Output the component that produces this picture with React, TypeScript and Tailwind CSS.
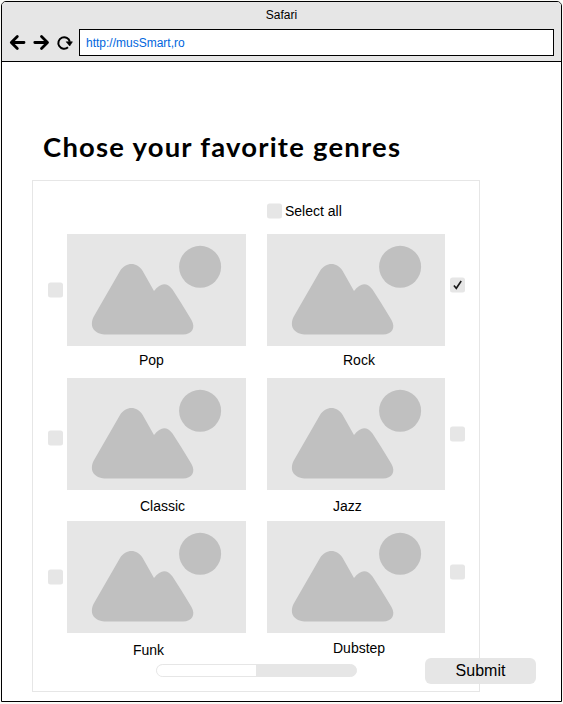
type Genre = { name: string; box: string; caption: string; row: string; checked?: boolean };

const left: Genre[] = [
  { name: "Pop", box: "mt-[48px]", caption: "pl-[72px] pt-[6px]", row: "h-[144px]" },
  { name: "Classic", box: "mt-[52px]", caption: "pl-[73px] pt-[8px]", row: "h-[143px]" },
  { name: "Funk", box: "mt-[48px]", caption: "pl-[66px] pt-[9px]", row: "h-[143px]" },
];

const right: Genre[] = [
  { name: "Rock", box: "mt-[43px]", caption: "pl-[76px] pt-[6px]", row: "h-[144px]", checked: true },
  { name: "Jazz", box: "mt-[48px]", caption: "pl-[66px] pt-[8px]", row: "h-[143px]" },
  { name: "Dubstep", box: "mt-[43px]", caption: "pl-[66px] pt-[7px]", row: "h-[143px]" },
];

function Box({ className = "", checked = false }: { className?: string; checked?: boolean }) {
  return (
    <svg viewBox="0 0 15 16" className={`block h-[16px] w-[15px] shrink-0 ${className}`} fill="none">
      <rect y=".4" width="15" height="15.2" rx="2.5" fill="#e6e6e6" />
      {checked && <path d="M3.9 8.4 6.3 11.3 11.2 4" stroke="#1a1a1a" strokeWidth="1.6" />}
    </svg>
  );
}

function Picture({ className }: { className: string }) {
  return (
    <svg viewBox="0 0 179 112" preserveAspectRatio="xMinYMin slice" className={`block h-[112px] bg-[#e6e6e6] ${className}`} fill="#c0c0c0">
      <circle cx="133.1" cy="32.8" r="21" />
      <path d="M53 37C59 27.7 70 27.7 75.7 37L87 57Q97 44.5 105.5 55.5Q115 70 124.5 86C129 94 125 100.5 116 100.5H40C27 100.5 22 93 26.5 83Z" />
    </svg>
  );
}

export default function App() {
  return (
    <div className="h-[704px] w-[563px] overflow-hidden bg-[#f9f9f6] pl-px pt-px font-['Liberation_Sans',Arial,sans-serif] text-black">
      <div className="flex h-[701px] w-[561px] flex-col rounded-t-[5px] border border-black bg-white">
        <header className="h-[60px] shrink-0 rounded-t-[4px] border-b border-black bg-[#e6e6e6]">
          <div className="h-[27px] pt-[5px] text-center text-[12px] leading-4">Safari</div>
          <div className="flex items-center pl-[7px]">
            <svg width="70" height="26" viewBox="0 0 70 26" fill="none" stroke="black" strokeWidth="2.8">
              <path d="M2.5 12.5H15M8.3 6.5 2.3 12.5l6 6" strokeLinecap="round" strokeLinejoin="round" />
              <path d="M25.8 12.5H38.3M32.5 6.5l6 6-6 6" strokeLinecap="round" strokeLinejoin="round" />
              <path d="M59 17.3A5.8 5.8 0 1 1 60.8 11.7" strokeWidth="2" />
              <path d="M57.2 11.8h6.2l-2.7 4.2z" fill="black" strokeWidth=".6" />
            </svg>
            <div className="flex h-[27px] w-[475px] items-center border border-black bg-white pl-[6px] text-[12px] text-[#0066dd]">
              http://musSmart,ro
            </div>
          </div>
        </header>
        <main className="relative flex-1 pl-[30px] pt-[66px]">
          <h1 className="ml-[11px] h-[52px] w-[360px] origin-left scale-x-[1.056] whitespace-nowrap pt-px font-[Lato] text-[26px] font-bold leading-[36px] tracking-[1.15px]">
            Chose your favorite genres
          </h1>
          <section className="h-[512px] w-[448px] border border-[#e6e6e6] pt-[22px]">
            <label className="flex h-[31px] gap-[3px] pl-[234px] text-[14px] leading-4">
              <Box />
              Select all
            </label>
            <div className="flex gap-[21px] pl-[15px]">
              <div>
                {left.map((g) => (
                  <div key={g.name} className={`flex gap-[4px] ${g.row}`}>
                    <Box className={g.box} />
                    <div>
                      <Picture className="w-[179px]" />
                      <p className={`text-[14px] leading-4 ${g.caption}`}>{g.name}</p>
                    </div>
                  </div>
                ))}
              </div>
              <div>
                {right.map((g) => (
                  <div key={g.name} className={`flex gap-[5px] ${g.row}`}>
                    <div>
                      <Picture className="w-[178px]" />
                      <p className={`text-[14px] leading-4 ${g.caption}`}>{g.name}</p>
                    </div>
                    <Box className={g.box} checked={g.checked} />
                  </div>
                ))}
              </div>
            </div>
            <div className="ml-[123px] flex h-[13px] w-[201px] overflow-hidden rounded-full border border-[#e6e6e6] bg-[#e6e6e6]">
              <div className="w-[99px] bg-white" />
            </div>
          </section>
          <button className="absolute left-[423px] top-[596px] h-[26px] w-[111px] rounded-[6px] bg-[#e6e6e6] text-[16px] leading-[26px]">
            Submit
          </button>
        </main>
      </div>
    </div>
  );
}
